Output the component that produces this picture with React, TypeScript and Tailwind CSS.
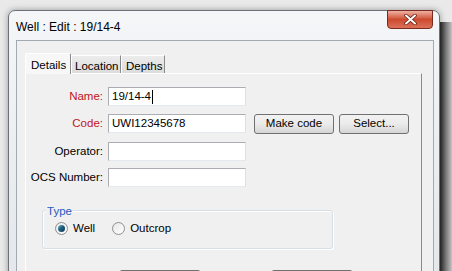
import type { ReactNode } from 'react';

const font = { fontFamily: '"Liberation Sans", Arial, sans-serif' };

function Field({ label, required, value, caret, children }: { label: string; required?: boolean; value?: string; caret?: boolean; children?: ReactNode }) {
  return (
    <div className="flex items-center h-[19px]">
      <div className={`w-[78px] text-right pr-[1px] ${required ? 'text-[#c0151b]' : 'text-black'}`}>{label}</div>
      <div className="ml-[4px] w-[138px] h-[19px] bg-white border border-[#abadb3] border-r-[#dbdfe6] border-b-[#e3e9ef] flex items-center pl-[3px] text-black">
        <span>{value}</span>
        {caret && <span className="w-px h-[14px] bg-black ml-[1px]" />}
      </div>
      {children}
    </div>
  );
}

function Button({ label, w }: { label?: string; w: string }) {
  return (
    <div className={`${w} h-[20px] rounded-[3px] border border-[#707070] bg-gradient-to-b from-[#f2f2f2] via-[#ebebeb] to-[#d5d5d5] flex items-center justify-center text-black`}>
      {label}
    </div>
  );
}

function Radio({ checked, label }: { checked?: boolean; label: string }) {
  return (
    <div className="flex items-center gap-[5px]">
      <div className="w-[13px] h-[13px] rounded-full border border-[#8f8f8f] bg-gradient-to-br from-[#e6e6e6] to-[#ffffff] flex items-center justify-center">
        {checked && <div className="w-[7px] h-[7px] rounded-full bg-gradient-to-br from-[#5fb0d0] via-[#1d5b7a] to-[#0e3a52]" />}
      </div>
      <span>{label}</span>
    </div>
  );
}

export default function App() {
  return (
    <div className="w-[452px] h-[271px] relative overflow-hidden bg-[#e9e9e9] text-[11.5px]" style={font}>
      <div className="absolute left-[440px] top-[22px] w-[12px] h-[260px] bg-gradient-to-r from-[#2c2c2c] via-[#7a7a7a] to-[#c4c4c4]" />
      <div className="absolute left-[8px] top-[10px] w-[432px] h-[290px] rounded-t-[7px] border border-[#6b7179] bg-gradient-to-b from-[#f4f6f8] to-[#e3e6ea] shadow-[0_0_6px_rgba(0,0,0,0.35)]">
        <div className="h-[29px] flex items-start relative">
          <div className="pl-[7px] pt-[7px] text-[12px] text-black">Well : Edit : 19/14-4</div>
          <div className="absolute left-[378px] top-[-1px] w-[46px] h-[19px] rounded-b-[4px] border border-[#7a2a1e] bg-gradient-to-b from-[#eeb1a2] via-[#cc4a2f] to-[#dc7058] flex items-center justify-center">
            <svg width="13" height="11" viewBox="0 0 13 11">
              <path d="M2 1.5 L11 9.5 M11 1.5 L2 9.5" stroke="#5a1a10" strokeWidth="3.4" strokeLinecap="round" />
              <path d="M2 1.5 L11 9.5 M11 1.5 L2 9.5" stroke="#ffffff" strokeWidth="2" strokeLinecap="round" />
            </svg>
          </div>
        </div>
        <div className="ml-[7px] w-[418px] h-[260px] border border-[#a3a9b1] bg-[#f0f0f0] pl-[8px] pt-[11px]">
          <div className="flex items-end h-[21px]">
            <div className="w-[46px] h-[21px] bg-[#f7f7f7] border-t border-l border-white border-r border-r-[#8a8a8a] rounded-t-[2px] pl-[5px] pt-[3px] relative z-10 -mb-px">Details</div>
            <div className="w-[50px] h-[18px] bg-gradient-to-b from-[#ececec] to-[#dcdcdc] border-t border-l border-white border-r border-r-[#8a8a8a] pl-[3px] pt-[2px]">Location</div>
            <div className="w-[44px] h-[18px] bg-gradient-to-b from-[#ececec] to-[#dcdcdc] border-t border-l border-white border-r border-r-[#8a8a8a] pl-[4px] pt-[2px]">Depths</div>
          </div>
          <div className="w-[397px] h-[220px] border-t border-l border-white border-r border-r-[#8a8a8a] bg-[#f0f0f0] pt-[13px]">
            <div className="flex flex-col gap-[8px]">
              <Field label="Name:" required value="19/14-4" caret />
              <Field label="Code:" required value="UWI12345678">
                <div className="ml-[8px] flex gap-[5px]">
                  <Button label="Make code" w="w-[80px]" />
                  <Button label="Select..." w="w-[70px]" />
                </div>
              </Field>
              <div className="mt-[1px]">
                <Field label="Operator:" />
              </div>
              <div className="-mt-[1px]">
                <Field label="OCS Number:" />
              </div>
            </div>
            <div className="ml-[16px] mt-[23px] w-[291px] h-[39px] rounded-[3px] border border-[#d5dfe5] shadow-[inset_1px_1px_0_#ffffff,1px_1px_0_#ffffff] relative">
              <div className="absolute left-[3px] top-[-8px] px-[1px] bg-[#f0f0f0] text-[#1f5bbf]">Type</div>
              <div className="flex items-center gap-[17px] pl-[12px] pt-[9px]">
                <Radio checked label="Well" />
                <Radio label="Outcrop" />
              </div>
            </div>
            <div className="flex gap-[70px] ml-[93px] mt-[21px]">
              <Button w="w-[82px]" />
              <Button w="w-[82px]" />
            </div>
          </div>
        </div>
      </div>
    </div>
  );
}
